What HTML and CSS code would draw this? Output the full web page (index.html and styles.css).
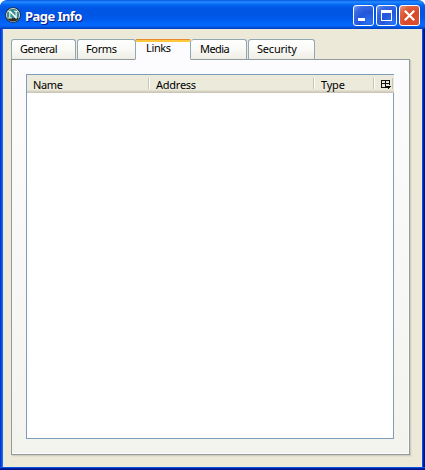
FILE: index.html
```html
<!DOCTYPE html>
<html lang="en">
<head>
<meta charset="utf-8">
<title>Page Info</title>
<link rel="stylesheet" href="styles.css">
</head>
<body>
<div class="window">
  <header class="titlebar">
    <svg class="logo" width="16" height="16" viewBox="0 0 16 16">
      <circle cx="8" cy="8" r="7.8" fill="#202c30"/>
      <circle cx="8" cy="8" r="6.6" fill="#34878b" stroke="#c5cac4" stroke-width="1"/>
      <path d="M2.2 11h11.6A6.5 6.5 0 0 1 2.2 11z" fill="#302c29"/>
      <path d="M3 3.7h2.6l4.9 5V4.7H9v-1h4v1h-1.2v7h-1L5.4 6v4.5H7v1H3v-1h1.2V4.7H3z" fill="#e4f5f2"/>
    </svg>
    <h1>Page Info</h1>
    <div class="controls">
      <button class="control" aria-label="Minimize"><svg width="19" height="19"><path d="M4 12h7v3H4z" fill="#fff"/></svg></button>
      <button class="control" aria-label="Maximize"><svg width="19" height="19"><path d="M4 4h11v11H4zM5 7v7h9V7z" fill="#fff" fill-rule="evenodd"/></svg></button>
      <button class="control close" aria-label="Close"><svg width="19" height="19"><path d="M4.8 4.8l9.4 9.4M14.2 4.8l-9.4 9.4" stroke="#fff" stroke-width="2.2"/></svg></button>
    </div>
  </header>
  <main>
    <nav class="tabs">
      <div class="tab general"><span>General</span></div>
      <div class="tab forms"><span>Forms</span></div>
      <div class="tab links active"><span>Links</span></div>
      <div class="tab media"><span>Media</span></div>
      <div class="tab security"><span>Security</span></div>
    </nav>
    <section class="panel">
      <div class="list">
        <div class="columns">
          <div class="col"><span class="name">Name</span></div>
          <div class="col"><span class="address">Address</span></div>
          <div class="col"><span class="type">Type</span></div>
          <div class="col picker"><svg width="10" height="9" shape-rendering="crispEdges"><path d="M0 0h9v5H8V4H5v3h1v1H0zM1 1v2h3V1zM5 1v2h3V1zM1 4v3h3V4z" fill="#111" fill-rule="evenodd"/><path d="M5 6h5v1H9v1H8v1H7V8H6V7H5z" fill="#111"/></svg></div>
        </div>
      </div>
    </section>
  </main>
</div>
</body>
</html>
```
FILE: styles.css
```css
* { box-sizing: border-box; }
body { margin: 0; background: #fff; font: 11px/14px "Noto Sans", sans-serif; color: #000; }
.window {
  width: 425px; height: 470px; display: flex; flex-direction: column;
  background: linear-gradient(90deg, #0831d9 0 1px, #0855dd 1px 2px, #166aee 2px 3px, #ece9d8 3px 422px, #0855dd 422px 423px, #001ea0 423px 424px, #00138c 424px);
  border-radius: 7px 7px 0 0; overflow: hidden;
}
.titlebar {
  height: 29px; flex: none; display: flex; align-items: center; padding: 2px 5px 0 5px;
  background: linear-gradient(#0058e0 0, #2b89ff 2px, #127dff 3px, #0364f0 5px, #0057e5 8px, #0056e4 15px, #005cf1 20px, #0367fd 24px, #0364f8 26px, #0049cc 28px, #003dc0 29px);
}
.logo { flex: none; margin-top: -2px; }
h1 { margin: 0 0 0 4px; font: bold 13px/18px "Noto Sans", sans-serif; color: #fff; text-shadow: 1px 1px 0 #0a1883; letter-spacing: -.55px; }
.controls { display: flex; gap: 2px; margin-left: auto; }
.control {
  width: 21px; height: 21px; padding: 0; border: 1px solid #fff; border-radius: 3px;
  background: radial-gradient(circle at 80% 85%, #2c72f3 0, #2355da 45%, #3a6ae3 75%, #7b9cf0 100%);
}
.control svg { display: block; }
.close { background: radial-gradient(circle at 80% 85%, #dd512e 0, #d84726 45%, #df6442 75%, #eda18c 100%); }
main { height: 441px; margin: 0 3px; padding: 10px 11px 0 8px; }
.window::after { content: ""; position: absolute; left: 0; top: 467px; width: 425px; height: 3px; background: linear-gradient(#0855dd 0 1px, #001ea0 1px 2px, #00138c 2px); }
.tabs { display: flex; height: 20px; position: relative; }
.tab {
  height: 21px; padding: 2px 0 0 8px; border: 1px solid #91a7b4; border-bottom-color: #919b9c;
  border-radius: 3px 3px 0 0; background: linear-gradient(#fff, #f8f8f4 55%, #eeede5);
}
.tab span, .columns span { display: block; white-space: nowrap; letter-spacing: -.35px; }
.general { width: 65px; margin-right: 1px; }
.forms { width: 59px; }
.links { width: 56px; margin-left: -1px; padding-left: 10px; }
.media { width: 56px; border-left: 0; padding-left: 9px; margin-right: 1px; }
.security { width: 67px; }
.tab.active { padding-top: 0; margin-top: 0; border-top: 3px solid #ffc73c; border-bottom-color: #fcfcfe; background: #fcfcfe; position: relative; }
.tab.active span { margin-top: -1px; }
.active::before { content: ""; position: absolute; left: 0; right: 0; top: -3px; height: 1px; background: #e68b2c; }
.tab.general span { letter-spacing: -.5px; }
.tab.media span { letter-spacing: -.6px; }
.columns .address { letter-spacing: -.25px; }
.tab.security span, .columns .type { letter-spacing: -.2px; }
.panel {
  width: 399px; height: 396px; padding: 14px; border: 1px solid #919b9c;
  background: linear-gradient(#fcfcfe, #f3f3ee); box-shadow: inset -1px -1px #fcfcfe, 1px 1px #d0cebf, 2px 2px #e3e0d0;
}
.list { width: 368px; height: 365px; border: 1px solid #7f9db9; background: #fff; }
.columns {
  display: grid; grid-template-columns: 122px 165px 60px 20px; height: 18px; width: 367px;
  background: linear-gradient(#ebeadb 0 15px, #e2decd 15px 16px, #d6d2c2 16px 17px, #cbc7b8 17px);
}
.col { position: relative; padding: 3px 0 0 6px; }
.col + .col { padding-left: 7px; }
.col:not(:last-child)::after { content: ""; position: absolute; right: -1px; top: 3px; width: 2px; height: 11px; background: linear-gradient(90deg, #c7c5b2 50%, #fff 50%); }
.columns .picker { padding: 5px 0 0 7px; }
.picker::after { content: ""; position: absolute; right: 1px; top: 3px; width: 1px; height: 11px; background: #c7c5b2; }
.picker svg { display: block; }
```
